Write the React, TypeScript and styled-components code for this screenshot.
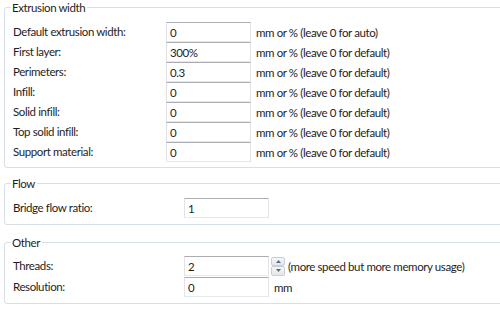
import styled, { createGlobalStyle } from 'styled-components';

const GlobalStyle = createGlobalStyle`
  html, body {
    margin: 0;
    padding: 0;
    background: #fff;
    overflow: hidden;
  }
  body {
    font-family: Lato, "Open Sans", sans-serif;
    font-size: 11.5px;
    letter-spacing: -0.4px;
    color: #1e1e1e;
  }
`;

const Page = styled.div`
  width: 500px;
  height: 327px;
  overflow: hidden;
`;

const Group = styled.fieldset<{ $gap: number; $bottom: number; $top: number }>`
  margin: ${p => p.$gap}px -20px 0 4px;
  padding: ${p => p.$top}px 8px ${p => p.$bottom}px 8px;
  border: 1px solid #d5dfe5;
  border-radius: 3px;
  min-width: 0;
`;

const Legend = styled.legend`
  padding: 0 2px 0 1px;
  margin-left: -2px;
  height: 15px;
  line-height: 15px;
`;

const Rows = styled.div<{ $label: number; $pitch: number }>`
  display: grid;
  grid-template-columns: ${p => p.$label}px 85px auto;
  grid-auto-rows: ${p => p.$pitch}px;
  align-items: start;
`;

const Label = styled.span`
  height: 20px;
  line-height: 20px;
  white-space: nowrap;
`;

const Input = styled.input`
  box-sizing: border-box;
  width: 85px;
  height: 20px;
  margin: 0;
  padding: 0 3px;
  font: inherit;
  letter-spacing: inherit;
  color: #1e1e1e;
  border: 1px solid #e2e3ea;
  border-top-color: #abadb3;
  border-bottom-color: #e3e9ef;
  outline: none;
  background: #fff;
`;

const Unit = styled.span`
  display: flex;
  align-items: center;
  height: 20px;
  padding-left: 5px;
  gap: 3px;
  white-space: nowrap;
`;

const Spinner = styled.div`
  display: flex;
  flex-direction: column;
  width: 14px;
  height: 19px;
  margin-left: -3px;
`;

const SpinBtn = styled.div`
  flex: 1;
  display: flex;
  align-items: center;
  justify-content: center;
  border: 1px solid #c9ced6;
  border-radius: 2px;
  background: linear-gradient(#f5f6f8, #e4e7eb);
`;

const Arrow = ({ up }: { up?: boolean }) => (
  <svg width="5" height="3" viewBox="0 0 5 3">
    <path d={up ? 'M0 3 L2.5 0 L5 3Z' : 'M0 0 L2.5 3 L5 0Z'} fill="#5a6b80" />
  </svg>
);

type Row = [string, string, string];

const extrusion: Row[] = [
  ['Default extrusion width:', '0', 'mm or % (leave 0 for auto)'],
  ['First layer:', '300%', 'mm or % (leave 0 for default)'],
  ['Perimeters:', '0.3', 'mm or % (leave 0 for default)'],
  ['Infill:', '0', 'mm or % (leave 0 for default)'],
  ['Solid infill:', '0', 'mm or % (leave 0 for default)'],
  ['Top solid infill:', '0', 'mm or % (leave 0 for default)'],
  ['Support material:', '0', 'mm or % (leave 0 for default)'],
];

export default function App() {
  return (
    <Page>
      <GlobalStyle />
      <Group $gap={0} $top={7} $bottom={5}>
        <Legend>Extrusion width</Legend>
        <Rows $label={153} $pitch={20}>
          {extrusion.map(([label, value, unit]) => (
            <>
              <Label key={label + 'l'}>{label}</Label>
              <Input key={label + 'i'} defaultValue={value} />
              <Unit key={label + 'u'}>{unit}</Unit>
            </>
          ))}
        </Rows>
      </Group>

      <Group $gap={8} $top={7} $bottom={6}>
        <Legend>Flow</Legend>
        <Rows $label={171} $pitch={20}>
          <Label>Bridge flow ratio:</Label>
          <Input defaultValue="1" />
          <span />
        </Rows>
      </Group>

      <Group $gap={10} $top={6} $bottom={5}>
        <Legend>Other</Legend>
        <Rows $label={171} $pitch={21}>
          <Label>Threads:</Label>
          <Input defaultValue="2" />
          <Unit>
            <Spinner>
              <SpinBtn><Arrow up /></SpinBtn>
              <SpinBtn><Arrow /></SpinBtn>
            </Spinner>
            (more speed but more memory usage)
          </Unit>
          <Label>Resolution:</Label>
          <Input defaultValue="0" />
          <Unit>mm</Unit>
        </Rows>
      </Group>
    </Page>
  );
}
